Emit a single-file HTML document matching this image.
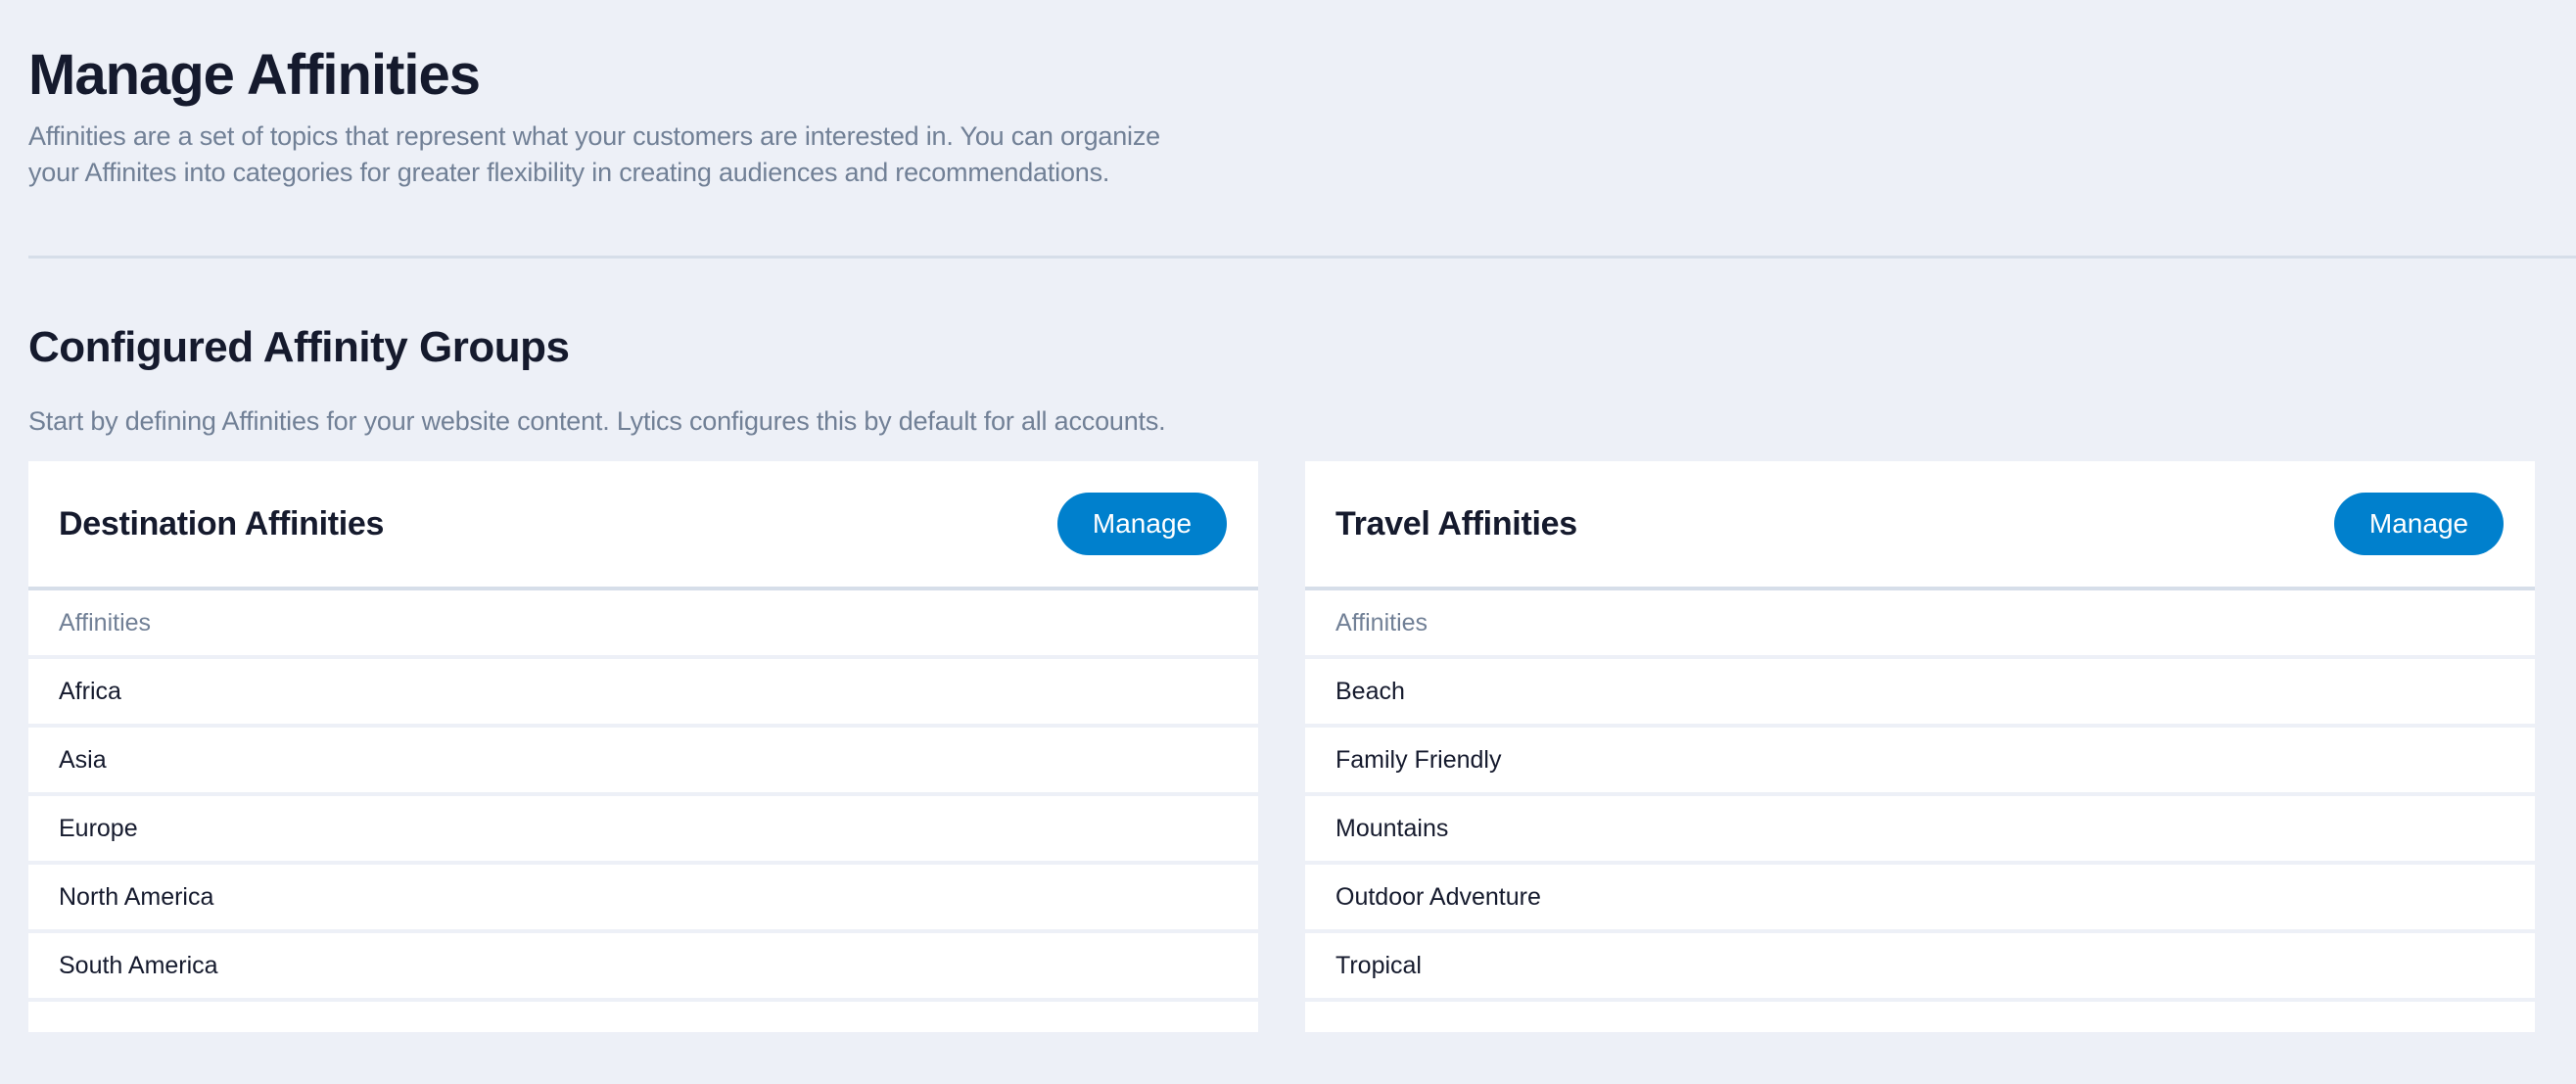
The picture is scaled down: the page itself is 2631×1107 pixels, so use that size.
<!DOCTYPE html>
<html><head><meta charset="utf-8"><style>
*{margin:0;padding:0;box-sizing:border-box}
body{width:2631px;height:1107px;background:#edf0f7;font-family:"Liberation Sans",sans-serif;position:relative;overflow:hidden;color:#151a2d}
.abs{position:absolute;white-space:nowrap}
h1{position:absolute;left:29px;top:42px;font-size:58px;font-weight:bold;letter-spacing:-1px;line-height:70px}
.desc{position:absolute;left:29px;top:121px;font-size:27px;line-height:37px;color:#718096;letter-spacing:-0.2px}
.hr{position:absolute;left:29px;right:0;top:261px;height:3px;background:#d6dee9}
h2{position:absolute;left:29px;top:327px;font-size:44px;font-weight:bold;letter-spacing:-0.5px;line-height:56px}
.sub{position:absolute;left:29px;top:412px;font-size:27px;line-height:36px;color:#718096;letter-spacing:-0.2px}
.card{position:absolute;top:471px;width:1256px;height:583px}
.head{height:128px;background:#fff;position:relative;border-bottom:4px solid #d6dee9;height:132px}
.head .t{position:absolute;left:31px;top:44px;font-size:34px;font-weight:bold;line-height:40px;letter-spacing:-0.3px}
.btn{position:absolute;right:32px;top:32px;width:173px;height:64px;border-radius:32px;background:#0080cd;color:#fff;font-size:28px;line-height:64px;text-align:center}
.row{height:66px;background:#fff;margin-bottom:4px;padding-left:31px;font-size:25px;line-height:66px}
.row.h{color:#718096}
.row.last{height:31px;margin:0}
</style></head><body>
<h1>Manage Affinities</h1>
<div class="desc">Affinities are a set of topics that represent what your customers are interested in. You can organize<br>your Affinites into categories for greater flexibility in creating audiences and recommendations.</div>
<div class="hr"></div>
<h2>Configured Affinity Groups</h2>
<div class="sub">Start by defining Affinities for your website content. Lytics configures this by default for all accounts.</div>
<div class="card" style="left:29px">
<div class="head"><div class="t">Destination Affinities</div><div class="btn">Manage</div></div>
<div class="row h">Affinities</div>
<div class="row">Africa</div>
<div class="row">Asia</div>
<div class="row">Europe</div>
<div class="row">North America</div>
<div class="row">South America</div>
<div class="row last"></div>
</div>
<div class="card" style="left:1333px">
<div class="head"><div class="t">Travel Affinities</div><div class="btn">Manage</div></div>
<div class="row h">Affinities</div>
<div class="row">Beach</div>
<div class="row">Family Friendly</div>
<div class="row">Mountains</div>
<div class="row">Outdoor Adventure</div>
<div class="row">Tropical</div>
<div class="row last"></div>
</div>
</body></html>
